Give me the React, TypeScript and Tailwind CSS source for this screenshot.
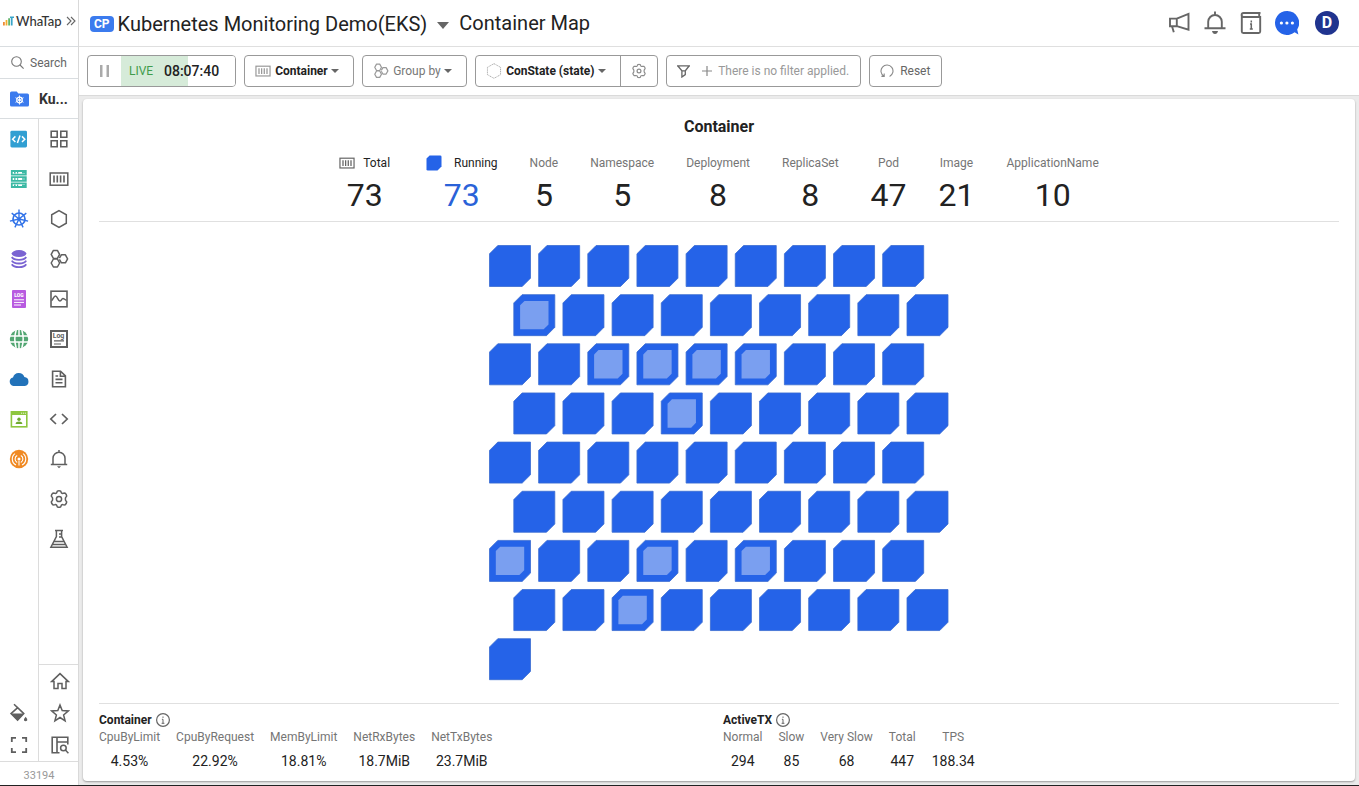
import type { ReactNode } from "react";

function Icon({ size = 20, children, className = "" }: { size?: number; children: ReactNode; className?: string }) {
  return (
    <svg
      width={size}
      height={size}
      viewBox="0 0 20 20"
      fill="none"
      stroke="currentColor"
      strokeWidth="1.5"
      className={`shrink-0 ${className}`}
      aria-hidden="true"
    >
      {children}
    </svg>
  );
}

const GEAR =
  "M7.6 3.9 8.3 2.2Q10 1.3 11.7 2.2L12.4 3.9Q13.2 4.6 14.2 4.3L16 4.1Q17.6 5.2 17.7 7.1L16.6 8.6Q16.1 10 16.6 11.4L17.7 12.9Q17.6 14.8 16 15.9L14.2 15.7Q13.2 15.4 12.4 16.1L11.7 17.8Q10 18.7 8.3 17.8L7.6 16.1Q6.8 15.4 5.8 15.7L4 15.9Q2.4 14.8 2.3 12.9L3.4 11.4Q3.9 10 3.4 8.6L2.3 7.1Q2.4 5.2 4 4.1L5.8 4.3Q6.8 4.6 7.6 3.9Z";

const BarcodeShapes = () => (
  <>
    <rect x="1.2" y="4" width="17.6" height="12.2" />
    <path d="M5 6.6v7M8.3 6.6v7M11.6 6.6v7M15 6.6v7" strokeWidth="1.6" />
  </>
);

const ClusterShapes = () => (
  <g strokeLinejoin="round">
    <path d="M4.4 1.4h4l2.2 4-2.2 4h-4l-2.2-4zM4.4 10h4l2.2 4-2.2 4h-4l-2.200-4z" />
    <path d="M10.4 9.2l2-3.4h4l2.200 4-2.200 4h-4l-2-3.400" />
  </g>
);

const KubeWheel = () => (
  <>
    <circle cx="10" cy="10" r="6" strokeWidth="1.7" />
    <path
      d="M10 10V.6M10 10l7.3-5.9M10 10l9.1 2.1M10 10l4.1 8.4M10 10l-4.1 8.4M10 10L.9 12.1M10 10L2.7 4.1"
      strokeWidth="1.4"
    />
    <circle cx="10" cy="10" r="1.6" fill="currentColor" stroke="none" />
  </>
);

const products: { label: string; icon: ReactNode }[] = [
  {
    label: "Application",
    icon: (
      <Icon>
        <rect x="1.4" y="1.8" width="16.6" height="16.6" rx="1.4" fill="#319fd2" stroke="none" />
        <path d="M6.4 7.4 3.6 10.2l2.8 2.8M13 7.4l2.8 2.8L13 13M11 6.4 8.400 14" stroke="#fff" strokeWidth="1.5" />
      </Icon>
    ),
  },
  {
    label: "Server",
    icon: (
      <Icon className="text-[#3cb9a4]">
        <path d="M2.8 2h14v3.600h-14zM2.800 8.200h14v3.600h-14zM2.800 14.400h14V18h-14z" strokeWidth="1.8" />
        <path d="M5 3.800h1.600M8 3.800h1.200M13 3.800h3M5 10h1.600M8 10h1.200M13 10h3M5 16.200h1.600M8 16.200h1.200M13 16.200h3" />
      </Icon>
    ),
  },
  { label: "Kubernetes", icon: <Icon className="text-[#3273e8]"><KubeWheel /></Icon> },
  {
    label: "Database",
    icon: (
      <Icon className="text-[#7a63d2]">
        <ellipse cx="10" cy="4.6" rx="7.4" ry="3.5" fill="currentColor" stroke="none" />
        <path d="M2.8 8q1.6 2.8 7.2 2.8T17.2 8M2.8 11.6q1.6 2.9 7.2 2.9t7.2-2.9M2.8 15.2q1.6 2.9 7.2 2.9t7.2-2.9" strokeWidth="1.8" />
      </Icon>
    ),
  },
  {
    label: "Logs",
    icon: (
      <span className="relative flex h-[18px] w-3.5 justify-center rounded-[1px] bg-[#b85be0]">
        <span className="pt-[2px] text-[5px] leading-[6px] font-black text-white">LOG</span>
        <svg className="absolute bottom-[2px] left-[2px]" width="10" height="7" viewBox="0 0 10 7" stroke="#fff" fill="none" aria-hidden="true">
          <path d="M0 .8h10M0 3.4h10M0 6h7" />
        </svg>
      </span>
    ),
  },
  {
    label: "Network",
    icon: (
      <Icon className="text-[#52a672]">
        <circle cx="10" cy="10" r="9.200" fill="currentColor" stroke="none" />
        <path d="M0 7h20M0 13h20M10 0v7M10 13v7M7.2 1Q4.400 10 7.2 19M12.8 1Q15.600 10 12.8 19" stroke="#fff" strokeWidth="1.500" />
      </Icon>
    ),
  },
  {
    label: "Cloud",
    icon: (
      <Icon className="text-[#2272b9]">
        <path d="M4.4 17A4.400 4.400 0 0 1 4 8.400 6 6 0 0 1 15.400 8.100 4.500 4.500 0 0 1 15.800 17Z" fill="currentColor" stroke="none" />
      </Icon>
    ),
  },
  {
    label: "Browser",
    icon: (
      <Icon className="text-[#8ec63f]">
        <rect x="2.4" y="2.8" width="15.4" height="15" strokeWidth="1.6" />
        <path d="M2 4.4h16" strokeWidth="3.2" />
        <path d="M12.2 4.200h1M14.2 4.2h1M16.2 4.2h.8" stroke="#fff" strokeWidth="1" />
        <circle cx="10" cy="10.200" r="1.700" fill="#6faa30" stroke="none" />
        <path d="M6.600 15q.4-2.400 3.400-2.400t3.400 2.400z" fill="#6faa30" stroke="none" />
      </Icon>
    ),
  },
  {
    label: "Integrations",
    icon: (
      <Icon className="text-[#f08a24]">
        <circle cx="10" cy="10" r="9.200" fill="currentColor" stroke="none" />
        <circle cx="10" cy="10" r="1.500" fill="#fff" stroke="none" />
        <path
          d="M8.200 13.400a3.800 3.800 0 0 1 0-6.800M11.800 6.600a3.800 3.800 0 0 1 0 6.800M7 16a6.700 6.700 0 0 1-1-11.400M14 4.600A6.700 6.700 0 0 1 13 16M10 12v4.500"
          stroke="#fff"
          strokeWidth="1.100"
        />
      </Icon>
    ),
  },
];

const menus: { label: string; icon: ReactNode }[] = [
  {
    label: "Dashboard",
    icon: <Icon><path d="M2.2 2.2h6v6h-6zM11.8 2.2h6v6h-6zM2.2 11.8h6v6h-6zM11.8 11.8h6v6h-6z" strokeWidth="1.6" /></Icon>,
  },
  { label: "Container map", icon: <Icon><BarcodeShapes /></Icon> },
  { label: "Node", icon: <Icon><path d="M10 1.6l7.3 4.2v8.4L10 18.4l-7.3-4.2V5.8z" /></Icon> },
  { label: "Cluster", icon: <Icon><ClusterShapes /></Icon> },
  {
    label: "Analysis",
    icon: (
      <Icon>
        <rect x="2" y="2.2" width="16" height="15.6" strokeWidth="1.6" />
        <path d="M2.5 11.5C4 11 4.6 7 6.5 7s2.6 5 4.4 5 1.6-2.6 3-2.6 2 1.6 3.6 1.8" />
      </Icon>
    ),
  },
  {
    label: "Log",
    icon: (
      <span className="relative flex h-[18px] w-[18px] justify-center border-2 border-current">
        <span className="text-[7px] leading-[8px] font-bold">Log</span>
        <svg className="absolute bottom-px left-[2px]" width="10" height="5" viewBox="0 0 10 5" stroke="currentColor" fill="none" aria-hidden="true">
          <path d="M0 .8h10M0 4h7" strokeWidth="1.2" />
        </svg>
      </span>
    ),
  },
  {
    label: "Report",
    icon: <Icon><path d="M3.6 2.2h8l4.8 4.6v11H3.6zM11.4 2.4v4.8h4.8M6.500 10.4h7M6.500 13.8h7M6.500 7h2.6" strokeWidth="1.6" /></Icon>,
  },
  { label: "Manifest", icon: <Icon><path d="M7 5 1.8 10 7 15M13 5l5.2 5-5.2 5" strokeWidth="1.700" /></Icon> },
  {
    label: "Alerts",
    icon: (
      <Icon>
        <path d="M1.8 15.5h16.4M4 15.5V9.2a6 6 0 0 1 12 0v6.3M10 3.2V1" />
        <path d="M8 17.200h4l-2 2z" fill="currentColor" stroke="none" />
      </Icon>
    ),
  },
  { label: "Settings", icon: <Icon><path d={GEAR} /><circle cx="10" cy="10" r="2.6" /></Icon> },
  {
    label: "Experimental",
    icon: <Icon><path d="M6 1.6h8M7.4 1.6v6L1.9 18.2h16.2L12.6 7.6v-6M5 12.6h10M3.6 15.4h12.8M10 5h2.6M10 8h2.6" /></Icon>,
  },
];

function SideButton({ label, children, className = "h-10" }: { label: string; children: ReactNode; className?: string }) {
  return (
    <button type="button" aria-label={label} title={label} className={`flex w-full items-center justify-center ${className}`}>
      {children}
    </button>
  );
}

function Caret() {
  return (
    <svg width="8" height="4" viewBox="0 0 8 4" className="pointer-events-none shrink-0" aria-hidden="true">
      <path d="M0 0h8L4 4z" fill="#666" />
    </svg>
  );
}

function Picker({ label, value, icon, className }: { label: string; value: string; icon: ReactNode; className: string }) {
  return (
    <label className={`flex items-center ${className}`}>
      {icon}
      <select aria-label={label} className="mr-[3px] ml-1 appearance-none bg-transparent">
        <option>{value}</option>
      </select>
      <Caret />
    </label>
  );
}

const box = "h-8 rounded border border-[#999] bg-white text-xs";

function Sidebar() {
  return (
    <aside className="flex w-[79px] shrink-0 flex-col border-r border-[#d9d9d9] bg-white text-[#5f5f5f]">
      <div className="flex h-[47px] items-center justify-between border-b border-[#d9dde0] pr-0.5 pb-1 pl-[3px]">
        <a href="#home" className="flex items-center gap-0.5">
          <svg width="11" height="10" viewBox="0 0 11 10" aria-hidden="true">
            <path d="M0 6h1.8v3.5H0z" fill="#ee8a35" />
            <path d="M2.6 4h1.8v5.5H2.6z" fill="#f0ae2e" />
            <path d="M5.2 2.2H7v7.3H5.2z" fill="#5fb56a" />
            <path d="M7 .5h4v1.6H9.600v7.4H7.8V2.1H7z" fill="#3aa5c9" />
          </svg>
          <span className="font-['Lato',sans-serif] text-[13px] leading-5 font-medium text-[#333]">WhaTap</span>
        </a>
        <button type="button" aria-label="Expand menu">
          <svg width="10" height="10" viewBox="0 0 10 10" fill="none" stroke="#666" strokeWidth="1.1" aria-hidden="true">
            <path d="M1 1l4 4-4 4M5 1l4 4-4 4" />
          </svg>
        </button>
      </div>
      <label className="flex h-8 items-center gap-1.5 border-b border-[#d9dde0] pl-[11px]">
        <svg width="13" height="13" viewBox="0 0 13 13" fill="none" stroke="#777" strokeWidth="1.1" aria-hidden="true">
          <circle cx="5.5" cy="5.5" r="4.8" />
          <path d="M9 9l3.6 3.6" />
        </svg>
        <input aria-label="Search" placeholder="Search" className="w-11 text-xs outline-none placeholder:text-[#666]" />
      </label>
      <button type="button" className="flex h-10 items-center gap-2.5 border-b border-[#d9dde0] pl-2.5 text-left">
        <svg width="19" height="16" viewBox="0 0 19 16" aria-hidden="true">
          <path d="M0 2Q0 .5 1.5.5h5.2l1.7 2h9Q19 2.5 19 4v10q0 1.5-1.5 1.5h-16Q0 15.5 0 14z" fill="#3b7bee" />
          <g stroke="#fff" fill="none">
            <circle cx="9.5" cy="9" r="2.8" strokeWidth="1.2" />
            <path d="M9.5 4.4v9.2M5.5 6.7l8 4.6M5.5 11.3l8-4.6" strokeWidth=".9" />
          </g>
        </svg>
        <span className="text-sm leading-5 font-bold text-[#333]">Ku...</span>
      </button>
      <div className="flex flex-1">
        <nav aria-label="Products" className="flex w-[39px] flex-col border-r border-[#dcdcdc]">
          {products.map((p) => (
            <SideButton key={p.label} label={p.label}>{p.icon}</SideButton>
          ))}
          <div className="mt-auto">
            <SideButton label="Theme" className="h-8">
              <Icon>
                <path d="M5 1.2l3.600 3.400 6.200 6-6.200 6.600-6.600-6.600 7-6.200" />
                <path d="M2 10.400h12.800l-6.200 7z" fill="currentColor" stroke="none" />
                <path d="M16.600 13.800q2.200 2.400 1.600 3.700-1.600 1.300-3.200 0-.5-1.300 1.600-3.700z" fill="currentColor" stroke="none" />
              </Icon>
            </SideButton>
            <SideButton label="Full screen" className="h-8">
              <Icon><path d="M2.8 7V2.8H7M13 2.8h4.2V7M17.2 13v4.2H13M7 17.2H2.8V13" strokeWidth="1.8" /></Icon>
            </SideButton>
          </div>
        </nav>
        <nav aria-label="Project menu" className="flex flex-1 flex-col">
          {menus.map((m) => (
            <SideButton key={m.label} label={m.label}>{m.icon}</SideButton>
          ))}
          <div className="mt-auto border-t border-[#dcdcdc] pl-0.5">
            <SideButton label="Home" className="h-8">
              <Icon><path d="M1.600 10.6 10 2.6l8.400 8H16v7h-4v-5H8v5H4v-7z" /></Icon>
            </SideButton>
            <SideButton label="Favorites" className="h-8">
              <Icon><path d="M10 2l2.200 5.600 6 .4-4.600 3.900 1.500 5.900L10 14.500l-5.100 3.300 1.500-5.900L1.800 8l6-.4z" /></Icon>
            </SideButton>
            <SideButton label="Layout" className="h-8">
              <Icon>
                <path d="M9.500 17.800H2.200V2.200h15.600v7.400M7 2.200v15.600M7 7h10.800" strokeWidth="1.600" />
                <circle cx="13.400" cy="13" r="2.800" />
                <path d="M15.400 15l3 3.200" />
              </Icon>
            </SideButton>
          </div>
        </nav>
      </div>
      <div className="border-t border-[#dcdcdc] pt-1.5 pb-px text-center text-[11px] leading-4 text-[#999]">33194</div>
    </aside>
  );
}

function Header() {
  return (
    <header className="flex h-[47px] items-center border-b border-[#dfdfdf] bg-white pr-5 pl-[11px]">
      <span className="mt-0.5 rounded bg-[#3b7bee] px-1 text-xs leading-4 font-bold text-white">CP</span>
      <button type="button" className="mt-0.5 ml-1 flex items-center text-xl leading-6 text-[#222]">
        Kubernetes Monitoring Demo(EKS)
        <svg width="12" height="7" viewBox="0 0 12 7" className="mx-2.5 mt-0.5" aria-hidden="true">
          <path d="M0 0h12L6 7z" fill="#666" />
        </svg>
      </button>
      <h1 className="text-xl leading-6 text-[#222]">Container Map</h1>
      <div className="ml-auto flex items-center gap-3 text-[#666]">
        <button type="button" aria-label="Announcements">
          <svg width="24" height="24" viewBox="0 0 24 24" fill="none" stroke="currentColor" strokeWidth="1.900" className="block" aria-hidden="true">
            <path d="M3 7.600h6.800v7.600H3zM9.800 7.600 21.500 2.800v15.900L9.800 15.200M5 15.200l1.800 6" />
          </svg>
        </button>
        <button type="button" aria-label="Notifications">
          <svg width="24" height="24" viewBox="0 0 24 24" fill="none" stroke="currentColor" strokeWidth="1.900" className="block" aria-hidden="true">
            <path d="M1.500 17.200h21M5.200 17v-6.200a6.800 6.800 0 0 1 13.600 0V17M12 4V.4" />
            <path d="M9 20h6q-.6 3-3 3t-3-3z" fill="currentColor" stroke="none" />
          </svg>
        </button>
        <button type="button" aria-label="Guide">
          <svg width="24" height="24" viewBox="0 0 24 24" fill="none" stroke="currentColor" strokeWidth="1.900" className="block" aria-hidden="true">
            <path d="M21.500 2H4.600a2 2 0 0 0 0 4h16.600v14.500q0 1.500-1.500 1.500H4.300q-1.500 0-1.500-1.500V4M20.200 2.300V6" />
            <path d="M12.300 9.600v1.800M11 13h1.300v5M10.800 18h3" strokeWidth="1.500" />
          </svg>
        </button>
        <button type="button" aria-label="Chat">
          <svg width="24" height="24" viewBox="0 0 24 24" className="block" aria-hidden="true">
            <path d="M12 0a12 12 0 1 0 7.600 21.300l3.800 2.100-1.200-4.900A12 12 0 0 0 12 0z" fill="#2563e8" />
            <path d="M4.800 12a1.600 1.600 0 1 0 3.200 0 1.600 1.600 0 1 0-3.200 0M10.300 12a1.600 1.600 0 1 0 3.200 0 1.600 1.600 0 1 0-3.200 0M15.800 12a1.600 1.600 0 1 0 3.200 0 1.600 1.600 0 1 0-3.200 0" fill="#fff" />
          </svg>
        </button>
        <button type="button" aria-label="Account" className="ml-1 size-6 rounded-full bg-[#20348f] text-base leading-6 font-bold text-white">
          D
        </button>
      </div>
    </header>
  );
}

function Toolbar() {
  return (
    <div className="flex flex-wrap gap-2 border-b border-[#dadada] bg-white p-2">
      <div className={`flex overflow-hidden ${box}`}>
        <button type="button" aria-label="Pause" className="flex w-[33px] items-center justify-center">
          <svg width="9" height="12" viewBox="0 0 9 12" aria-hidden="true">
            <path d="M0 0h2.500v12H0zM6.500 0H9v12H6.500z" fill="#aaa" />
          </svg>
        </button>
        <div className="flex items-center bg-linear-to-r from-[#d6ebd9] from-[67px] to-white to-[67px] pr-4 pl-2">
          <span className="w-[35px] text-[#3f9c4c]">LIVE</span>
          <time className="text-sm font-medium text-[#222]">08:07:40</time>
        </div>
      </div>
      <Picker
        label="Target"
        value="Container"
        className={`pr-3.5 pl-2.5 font-bold text-[#222] ${box}`}
        icon={<Icon size={16} className="text-[#999]"><BarcodeShapes /></Icon>}
      />
      <Picker
        label="Group by"
        value="Group by"
        className={`pr-3.5 pl-2.5 text-[#777] ${box}`}
        icon={<Icon size={16} className="text-[#999]"><ClusterShapes /></Icon>}
      />
      <div className={`flex ${box}`}>
        <Picker
          label="Color by"
          value="ConState (state)"
          className="border-r border-[#999] pr-3.5 pl-2.5 font-bold text-[#222]"
          icon={
            <Icon size={16} className="text-[#999]">
              <path d="M10 .8l8.200 4.600v9.200L10 19.200l-8.200-4.600V5.400z" strokeWidth="1" strokeDasharray="1.500 .8" />
            </Icon>
          }
        />
        <button type="button" aria-label="Color settings" className="flex w-9 items-center justify-center text-[#8c8c8c]">
          <Icon size={16}><path d={GEAR} /><circle cx="10" cy="10" r="2.400" /></Icon>
        </button>
      </div>
      <button type="button" className={`flex items-center pr-[11px] pl-2.5 text-[#999] ${box}`}>
        <svg width="13" height="13" viewBox="0 0 13 13" fill="none" stroke="#666" strokeWidth="1.300" aria-hidden="true">
          <path d="M0 .8h13M.9 1l4 4.800v6.200L8.300 9.600V5.800L12.100 1M4.600 5.800h4" />
        </svg>
        <svg width="10" height="10" viewBox="0 0 10 10" className="mr-1.5 ml-3" stroke="#888" strokeWidth="1.200" aria-hidden="true">
          <path d="M5 0v10M0 5h10" />
        </svg>
        There is no filter applied.
      </button>
      <button type="button" className={`flex items-center gap-1.5 pr-[11px] pl-2.5 text-[#666] ${box}`}>
        <svg width="14" height="14" viewBox="0 0 14 14" fill="none" stroke="#888" strokeWidth="1.100" aria-hidden="true">
          <path d="M4 12.200A6 6 0 1 1 9.600 12.400M4.200 9.600v2.800H1.400" />
        </svg>
        Reset
      </button>
    </div>
  );
}

const counts: [string, string][] = [
  ["Node", "5"],
  ["Namespace", "5"],
  ["Deployment", "8"],
  ["ReplicaSet", "8"],
  ["Pod", "47"],
  ["Image", "21"],
  ["ApplicationName", "10"],
];

function Counts() {
  return (
    <dl className="mt-4 flex flex-wrap justify-center gap-x-8 border-b border-[#e0e0e0] pb-1.5 text-center">
      <div className="mr-1">
        <dt className="flex items-center gap-2 text-xs text-[#222]">
          <Icon size={16} className="text-[#666]"><BarcodeShapes /></Icon>
          Total
        </dt>
        <dd className="mt-1 text-[32px] leading-10 text-[#222]">73</dd>
      </div>
      <div>
        <dt className="flex items-center gap-3 text-xs text-[#222]">
          <svg width="16" height="16" viewBox="0 0 16 16" aria-hidden="true">
            <path d="M3.600.5h10.600q1.300 0 1.300 1.300v9.600l-4 4.100H1.800Q.5 15.500.5 14.200V3.600z" fill="#2563e8" />
          </svg>
          Running
        </dt>
        <dd className="mt-1 text-[32px] leading-10 text-[#2a62d8]">73</dd>
      </div>
      {counts.map(([label, value]) => (
        <div key={label}>
          <dt className="text-xs text-[#757575]">{label}</dt>
          <dd className="mt-1 text-[32px] leading-10 text-[#222]">{value}</dd>
        </div>
      ))}
    </dl>
  );
}

const TOTAL = 73;
const COLUMNS = 9;
const PITCH = 49.15;
const ROW_SHIFT = 24.3;
const highlighted = new Set([9, 20, 21, 22, 23, 30, 54, 57, 59, 65]);

function ContainerMap() {
  return (
    <svg width="460" height="436" viewBox="0 0 460 436" role="img" aria-label="Map of 73 running containers">
      {Array.from({ length: TOTAL }, (_, i) => {
        const row = Math.floor(i / COLUMNS);
        const x = (i % COLUMNS) * PITCH + (row % 2) * ROW_SHIFT;
        const y = row * PITCH;
        return (
          <g key={i} transform={`translate(${x} ${y})`}>
            <path d="M8.800.5H41.500V33.200L33.200 41.500H.5V8.800z" fill="#2563e8" stroke="#3a6cd0" strokeWidth=".8" />
            {highlighted.has(i) && <path d="M11.200 6.800H35.200V30.400L30.400 35.200H6.800V11.200z" fill="#7a9ff0" />}
          </g>
        );
      })}
    </svg>
  );
}

function Metrics({ title, items }: { title: string; items: [string, string][] }) {
  return (
    <section>
      <h3 className="flex items-center gap-1 text-xs leading-4 font-bold text-[#222]">
        {title}
        <button type="button" aria-label={`About ${title}`}>
          <svg width="14" height="14" viewBox="0 0 14 14" fill="none" stroke="#666" className="block" aria-hidden="true">
            <circle cx="7" cy="7" r="6.400" strokeWidth="1.200" />
            <path d="M7 3.500v1.400M5.900 6.300H7v4M5.600 10.300h2.800" />
          </svg>
        </button>
      </h3>
      <dl className="flex flex-wrap gap-x-4 pt-px text-center">
        {items.map(([label, value]) => (
          <div key={label}>
            <dt className="text-xs leading-4 text-[#757575]">{label}</dt>
            <dd className="mt-1.5 text-sm leading-5 text-[#222]">{value}</dd>
          </div>
        ))}
      </dl>
    </section>
  );
}

export default function App() {
  return (
    <div className="flex min-h-screen border-b border-[#222] bg-[#ebebeb] font-['Roboto',sans-serif]">
      <Sidebar />
      <div className="flex min-w-0 flex-1 flex-col">
        <Header />
        <Toolbar />
        <main className="flex flex-1 flex-col px-1 pt-[3px] pb-1">
          <div className="flex flex-1 flex-col rounded bg-white px-4 pt-4 pb-2.5 shadow-[0_1px_2px_#999]">
            <h2 className="text-center text-base leading-6 font-bold text-[#222]">Container</h2>
            <Counts />
            <div className="flex flex-1 items-center justify-center">
              <ContainerMap />
            </div>
            <div className="grid grid-cols-2 gap-2 border-t border-[#e0e0e0] pt-2">
              <Metrics
                title="Container"
                items={[
                  ["CpuByLimit", "4.53%"],
                  ["CpuByRequest", "22.92%"],
                  ["MemByLimit", "18.81%"],
                  ["NetRxBytes", "18.7MiB"],
                  ["NetTxBytes", "23.7MiB"],
                ]}
              />
              <Metrics
                title="ActiveTX"
                items={[
                  ["Normal", "294"],
                  ["Slow", "85"],
                  ["Very Slow", "68"],
                  ["Total", "447"],
                  ["TPS", "188.34"],
                ]}
              />
            </div>
          </div>
        </main>
      </div>
    </div>
  );
}
